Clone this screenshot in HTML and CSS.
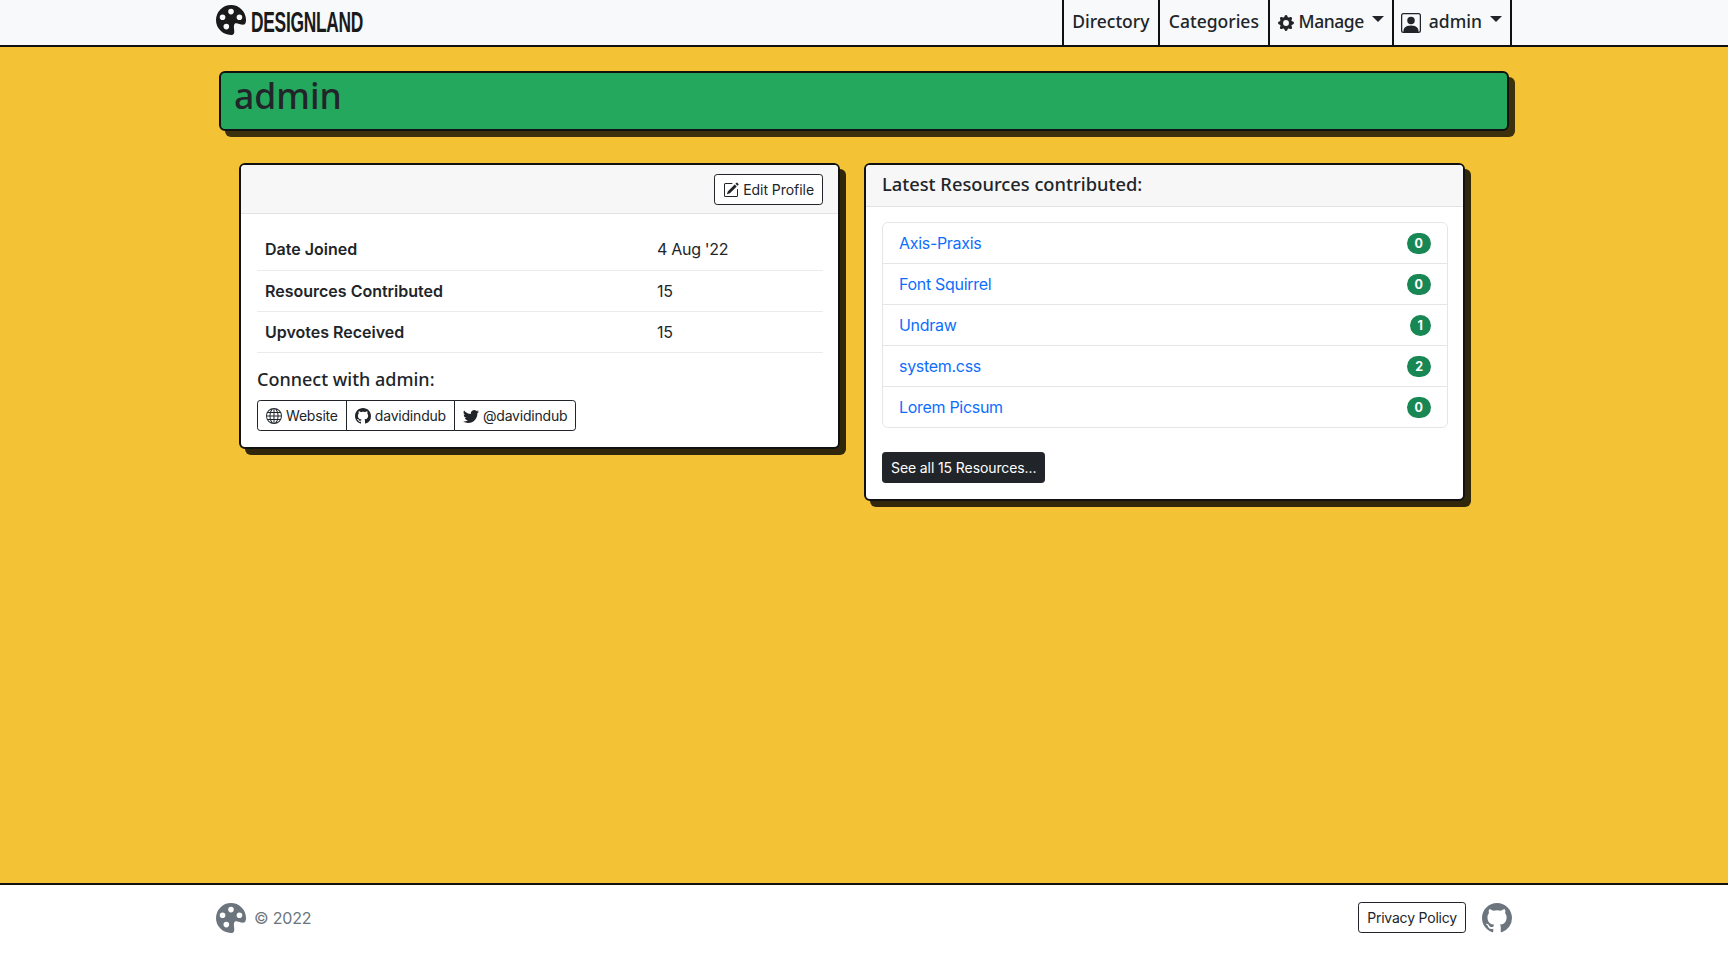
FILE: index.html
```html
<!DOCTYPE html>
<html lang="en">
<head>
    <meta charset="UTF-8">
    <meta name="viewport" content="width=device-width, initial-scale=1.0">
    <title>Designland - admin</title>
    <link rel="stylesheet" href="styles.css">
</head>
<body>
    <svg class="defs" width="0" height="0">
        <symbol id="palette" viewBox="0 0 16 16"><path d="M12.433 10.07C14.133 10.585 16 11.15 16 8a8 8 0 1 0-8 8c1.996 0 1.826-1.504 1.649-3.08-.124-1.101-.252-2.237.351-2.92.465-.527 1.42-.237 2.433.07zM8 5a1.5 1.5 0 1 1 0-3 1.5 1.5 0 0 1 0 3zm4.5 3a1.5 1.5 0 1 1 0-3 1.5 1.5 0 0 1 0 3zM5 6.5a1.5 1.5 0 1 1-3 0 1.5 1.5 0 0 1 3 0zm.5 6.5a1.5 1.5 0 1 1 0-3 1.5 1.5 0 0 1 0 3z"/></symbol>
        <symbol id="github" viewBox="0 0 16 16"><path d="M8 0C3.58 0 0 3.58 0 8c0 3.54 2.29 6.53 5.47 7.59.4.07.55-.17.55-.38 0-.19-.01-.82-.01-1.49-2.01.37-2.53-.49-2.69-.94-.09-.23-.48-.94-.82-1.13-.28-.15-.68-.52-.01-.53.63-.01 1.08.58 1.23.82.72 1.21 1.87.87 2.33.66.07-.52.28-.87.51-1.07-1.78-.2-3.64-.89-3.64-3.95 0-.87.31-1.59.82-2.15-.08-.2-.36-1.02.08-2.12 0 0 .67-.21 2.2.82.64-.18 1.32-.27 2-.27.68 0 1.36.09 2 .27 1.53-1.04 2.2-.82 2.2-.82.44 1.1.16 1.92.08 2.12.51.56.82 1.27.82 2.15 0 3.07-1.87 3.75-3.65 3.95.29.25.54.73.54 1.48 0 1.07-.01 1.93-.01 2.2 0 .21.15.46.55.38A8.012 8.012 0 0 0 16 8c0-4.42-3.58-8-8-8z"/></symbol>
    </svg>

    <nav class="navbar">
        <div class="container">
            <a class="brand" href="#">
                <svg class="brand-icon" fill="currentColor"><use href="#palette"/></svg>
                <span class="brand-name">DESIGNLAND</span>
            </a>
            <ul class="nav-links">
                <li class="nav-item nav-text">Directory</li>
                <li class="nav-item nav-text">Categories</li>
                <li class="nav-item nav-manage">
                    <svg class="nav-icon" viewBox="0 0 16 16" fill="currentColor"><path d="M9.405 1.05c-.413-1.4-2.397-1.4-2.81 0l-.1.34a1.464 1.464 0 0 1-2.105.872l-.31-.17c-1.283-.698-2.686.705-1.987 1.987l.169.311c.446.82.023 1.841-.872 2.105l-.34.1c-1.4.413-1.4 2.397 0 2.81l.34.1a1.464 1.464 0 0 1 .872 2.105l-.17.31c-.698 1.283.705 2.686 1.987 1.987l.311-.169a1.464 1.464 0 0 1 2.105.872l.1.34c.413 1.4 2.397 1.4 2.81 0l.1-.34a1.464 1.464 0 0 1 2.105-.872l.31.17c1.283.698 2.686-.705 1.987-1.987l-.169-.311a1.464 1.464 0 0 1 .872-2.105l.34-.1c1.4-.413 1.4-2.397 0-2.81l-.34-.1a1.464 1.464 0 0 1-.872-2.105l.17-.31c.698-1.283-.705-2.686-1.987-1.987l-.311.169a1.464 1.464 0 0 1-2.105-.872l-.1-.34zM8 10.93a2.929 2.929 0 1 1 0-5.86 2.929 2.929 0 0 1 0 5.858z"/></svg>
                    Manage <span class="caret"></span>
                </li>
                <li class="nav-item nav-user">
                    <svg class="nav-icon user-icon" viewBox="0 0 16 16" fill="currentColor"><path d="M11 6a3 3 0 1 1-6 0 3 3 0 0 1 6 0z"/><path d="M2 0a2 2 0 0 0-2 2v12a2 2 0 0 0 2 2h12a2 2 0 0 0 2-2V2a2 2 0 0 0-2-2H2zm12 1a1 1 0 0 1 1 1v12a1 1 0 0 1-1 1v-1c0-1-1-4-6-4s-6 3-6 4v1a1 1 0 0 1-1-1V2a1 1 0 0 1 1-1h12z"/></svg>
                    admin <span class="caret"></span>
                </li>
            </ul>
        </div>
    </nav>

    <main class="content">
        <h1 class="page-title">admin</h1>

        <div class="cards">
            <section class="card">
                <div class="card-header header-right">
                    <a class="btn btn-outline btn-edit" href="#">
                        <svg class="btn-icon" viewBox="0 0 16 16" fill="currentColor"><path d="M15.502 1.94a.5.5 0 0 1 0 .706L14.459 3.69l-2-2L13.502.646a.5.5 0 0 1 .707 0l1.293 1.293zm-1.75 2.456-2-2L4.939 9.21a.5.5 0 0 0-.121.196l-.805 2.414a.25.25 0 0 0 .316.316l2.414-.805a.5.5 0 0 0 .196-.12l6.813-6.814z"/><path d="M1 13.5A1.5 1.5 0 0 0 2.5 15h11a1.5 1.5 0 0 0 1.5-1.5v-6a.5.5 0 0 0-1 0v6a.5.5 0 0 1-.5.5h-11a.5.5 0 0 1-.5-.5v-11a.5.5 0 0 1 .5-.5H9a.5.5 0 0 0 0-1H2.5A1.5 1.5 0 0 0 1 2.5v11z"/></svg>
                        Edit Profile
                    </a>
                </div>
                <div class="card-body">
                    <table class="stats">
                        <tr><th>Date Joined</th><td>4 Aug '22</td></tr>
                        <tr><th>Resources Contributed</th><td>15</td></tr>
                        <tr><th>Upvotes Received</th><td>15</td></tr>
                    </table>
                    <h5 class="connect-title">Connect with admin:</h5>
                    <div class="btn-group">
                        <a class="btn btn-outline" href="#">
                            <svg class="btn-icon" viewBox="0 0 16 16" fill="currentColor"><path d="M0 8a8 8 0 1 1 16 0A8 8 0 0 1 0 8zm7.5-6.923c-.67.204-1.335.82-1.887 1.855A7.97 7.97 0 0 0 5.145 4H7.5V1.077zM4.09 4a9.267 9.267 0 0 1 .64-1.539 6.7 6.7 0 0 1 .597-.933A7.025 7.025 0 0 0 2.255 4H4.09zm-.582 3.5c.03-.877.138-1.718.312-2.5H1.674a6.958 6.958 0 0 0-.656 2.5h2.49zM4.847 5a12.5 12.5 0 0 0-.338 2.5H7.5V5H4.847zM8.5 5v2.5h2.99a12.495 12.495 0 0 0-.337-2.5H8.5zM4.51 8.5a12.5 12.5 0 0 0 .337 2.5H7.5V8.5H4.51zm3.99 0V11h2.653c.187-.765.306-1.608.338-2.5H8.5zM5.145 12c.138.386.295.744.468 1.068.552 1.035 1.218 1.65 1.887 1.855V12H5.145zm.182 2.472a6.696 6.696 0 0 1-.597-.933A9.268 9.268 0 0 1 4.09 12H2.255a7.024 7.024 0 0 0 3.072 2.472zM3.82 11a13.652 13.652 0 0 1-.312-2.5h-2.49c.062.89.291 1.733.656 2.5H3.82zm6.853 3.472A7.024 7.024 0 0 0 13.745 12H11.91a9.27 9.27 0 0 1-.64 1.539 6.688 6.688 0 0 1-.597.933zM8.5 12v2.923c.67-.204 1.335-.82 1.887-1.855.173-.324.33-.682.468-1.068H8.5zm3.68-1h2.146c.365-.767.594-1.61.656-2.5h-2.49a13.65 13.65 0 0 1-.312 2.5zm2.802-3.5a6.959 6.959 0 0 0-.656-2.5H12.18c.174.782.282 1.623.312 2.5h2.49zM11.27 2.461c.247.464.462.98.64 1.539h1.835a7.024 7.024 0 0 0-3.072-2.472c.218.284.418.598.597.933zM10.855 4a7.966 7.966 0 0 0-.468-1.068C9.835 1.897 9.17 1.282 8.5 1.077V4h2.355z"/></svg>
                            Website
                        </a>
                        <a class="btn btn-outline" href="#">
                            <svg class="btn-icon" fill="currentColor"><use href="#github"/></svg>
                            davidindub
                        </a>
                        <a class="btn btn-outline" href="#">
                            <svg class="btn-icon" viewBox="0 0 16 16" fill="currentColor"><path d="M5.026 15c6.038 0 9.341-5.003 9.341-9.334 0-.14 0-.282-.006-.422A6.685 6.685 0 0 0 16 3.542a6.658 6.658 0 0 1-1.889.518 3.301 3.301 0 0 0 1.447-1.817 6.533 6.533 0 0 1-2.087.793A3.286 3.286 0 0 0 7.875 6.03a9.325 9.325 0 0 1-6.767-3.429 3.289 3.289 0 0 0 1.018 4.382A3.323 3.323 0 0 1 .64 6.575v.045a3.288 3.288 0 0 0 2.632 3.218 3.203 3.203 0 0 1-.865.115 3.23 3.23 0 0 1-.614-.057 3.283 3.283 0 0 0 3.067 2.277A6.588 6.588 0 0 1 .78 13.58a6.32 6.32 0 0 1-.78-.045A9.344 9.344 0 0 0 5.026 15z"/></svg>
                            @davidindub
                        </a>
                    </div>
                </div>
            </section>

            <section class="card">
                <div class="card-header">
                    <h5 class="card-title">Latest Resources contributed:</h5>
                </div>
                <div class="card-body">
                    <ul class="resource-list">
                        <li class="resource"><a href="#">Axis-Praxis</a><span class="badge">0</span></li>
                        <li class="resource"><a href="#">Font Squirrel</a><span class="badge">0</span></li>
                        <li class="resource"><a href="#">Undraw</a><span class="badge">1</span></li>
                        <li class="resource"><a href="#">system.css</a><span class="badge">2</span></li>
                        <li class="resource"><a href="#">Lorem Picsum</a><span class="badge">0</span></li>
                    </ul>
                    <a class="btn btn-dark" href="#">See all 15 Resources...</a>
                </div>
            </section>
        </div>
    </main>

    <footer class="footer">
        <div class="container">
            <div class="footer-left">
                <svg class="footer-icon" fill="currentColor"><use href="#palette"/></svg>
                <span>© 2022</span>
            </div>
            <div class="footer-right">
                <a class="btn btn-outline" href="#">Privacy Policy</a>
                <svg class="footer-icon" fill="currentColor"><use href="#github"/></svg>
            </div>
        </div>
    </footer>
</body>
</html>
```

FILE: styles.css
```css
* {
    box-sizing: border-box;
}

body {
    display: flex;
    flex-direction: column;
    min-height: 100vh;
    margin: 0;
    background-color: #f4c235;
    color: #212529;
    font-family: Inter, "Liberation Sans", sans-serif;
    font-size: 16px;
    line-height: 1.5;
}

a {
    text-decoration: none;
}

.defs {
    position: absolute;
}

.container {
    display: flex;
    justify-content: space-between;
    align-items: center;
    width: 1296px;
    margin: 0 auto;
}

/* navbar */
.navbar {
    height: 47px;
    background-color: #f8f9fa;
    border-bottom: 2px solid #111;
}

.navbar .container {
    height: 45px;
}

.brand {
    display: flex;
    align-items: center;
    gap: 5px;
    height: 100%;
    padding-bottom: 6px;
    color: #1a1a1a;
}

.brand-icon {
    width: 30px;
    height: 30px;
}

.brand-name {
    display: inline-block;
    width: 113px;
    margin-top: 5px;
    font-family: "Liberation Sans", sans-serif;
    font-size: 29px;
    font-weight: 700;
    line-height: 1;
    letter-spacing: -0.5px;
    white-space: nowrap;
    transform: scaleX(0.6);
    transform-origin: left center;
}

.nav-links {
    display: flex;
    height: 100%;
    margin: 0;
    padding: 0;
    border-right: 2px solid #111;
    list-style: none;
}

.nav-item {
    display: flex;
    align-items: center;
    padding: 0 8px 3px;
    border-left: 2px solid #111;
    font-family: "Noto Sans", sans-serif;
    font-size: 17.5px;
    font-weight: 500;
    white-space: nowrap;
}

.nav-text {
    padding: 0 8.7px 3px;
}

.nav-manage {
    letter-spacing: -0.45px;
}

.nav-user {
    padding-left: 7px;
}

.nav-icon {
    width: 16px;
    height: 16px;
    margin-right: 5px;
    margin-top: 3px;
}

.user-icon {
    width: 20px;
    height: 20px;
    margin-right: 8px;
}

.caret {
    width: 0;
    height: 0;
    margin-left: 8px;
    margin-bottom: 5px;
    border-top: 6px solid #212529;
    border-left: 6px solid transparent;
    border-right: 6px solid transparent;
}

/* main */
.content {
    flex: 1;
    width: 1290px;
    margin: 24px auto 0;
}

.page-title {
    height: 60px;
    margin: 0;
    padding-left: 13px;
    background-color: #24a85d;
    border: 2px solid #111;
    border-radius: 6px;
    box-shadow: 6px 6px 0 rgba(0, 0, 0, 0.75);
    font-family: "Noto Sans", sans-serif;
    font-size: 35.5px;
    font-weight: 500;
    line-height: 44px;
}

.cards {
    display: flex;
    align-items: flex-start;
    gap: 24px;
    margin-top: 32px;
    padding-left: 20px;
}

.card {
    width: 601px;
    background-color: #fff;
    border: 2px solid #111;
    border-radius: 6px;
    box-shadow: 6px 6px 0 rgba(0, 0, 0, 0.8);
    overflow: hidden;
}

.card-header {
    display: flex;
    align-items: center;
    padding: 0 15px 0 16px;
    height: 42px;
    background-color: #f7f7f7;
    border-bottom: 1.5px solid #e2e2e2;
}

.header-right {
    justify-content: flex-end;
    height: 49px;
}

.card-title {
    margin: 0 0 3px;
    font-family: "Noto Sans", sans-serif;
    font-size: 18.3px;
    font-weight: 500;
}

.card-body {
    padding: 15px 15px 16px 16px;
}

/* table */
.stats {
    width: 100%;
    margin-bottom: 13px;
    border-collapse: collapse;
}

.stats tr {
    height: 41px;
    border-bottom: 1px solid #e9ecef;
}

.stats th {
    width: 392px;
    padding: 0 8px;
    font-weight: 600;
    text-align: left;
}

.stats td {
    padding: 0 8px;
    letter-spacing: -0.3px;
}

.connect-title {
    margin: 0 0 8px;
    font-family: "Noto Sans", sans-serif;
    font-size: 18px;
    font-weight: 500;
    line-height: 26px;
}

/* buttons */
.btn {
    display: inline-flex;
    align-items: center;
    height: 31px;
    padding: 0 8px;
    border-radius: 3.2px;
    font-size: 14px;
    letter-spacing: -0.2px;
    white-space: nowrap;
}

.btn-outline {
    background-color: #fff;
    border: 1px solid #212529;
    color: #212529;
}

.btn-dark {
    background-color: #212529;
    border: 1px solid #212529;
    color: #fff;
    letter-spacing: -0.1px;
}

.btn-edit {
    letter-spacing: -0.05px;
}

.btn-icon {
    width: 16px;
    height: 16px;
    margin-right: 4px;
    margin-top: 2px;
}

.btn-group {
    display: inline-flex;
}

.btn-group .btn {
    border-radius: 0;
}

.btn-group .btn + .btn {
    margin-left: -1px;
}

.btn-group .btn:first-child {
    border-radius: 3.2px 0 0 3.2px;
}

.btn-group .btn:last-child {
    border-radius: 0 3.2px 3.2px 0;
}

/* resource list */
.resource-list {
    margin: 0 0 24px;
    padding: 0;
    list-style: none;
    border: 1px solid #e6e6e6;
    border-radius: 6px;
}

.resource {
    display: flex;
    justify-content: space-between;
    align-items: center;
    height: 41px;
    padding: 0 16px;
    border-bottom: 1px solid #e6e6e6;
}

.resource:last-child {
    height: 40px;
    border-bottom: none;
}

.resource a {
    color: #0d6efd;
    letter-spacing: -0.3px;
}

.badge {
    display: inline-block;
    padding: 0 8px;
    height: 21px;
    background-color: #198754;
    border-radius: 50rem;
    color: #fff;
    font-size: 12.5px;
    font-weight: 700;
    line-height: 21px;
}

/* footer */
.footer {
    height: 74px;
    background-color: #fff;
    border-top: 2px solid #111;
}

.footer .container {
    height: 72px;
    padding-bottom: 7px;
}

.footer-left {
    display: flex;
    align-items: center;
    gap: 8px;
    color: #6c757d;
    letter-spacing: -0.2px;
}

.footer-right {
    display: flex;
    align-items: center;
    gap: 16px;
}

.footer-icon {
    width: 30px;
    height: 30px;
    color: #6c757d;
}
```
